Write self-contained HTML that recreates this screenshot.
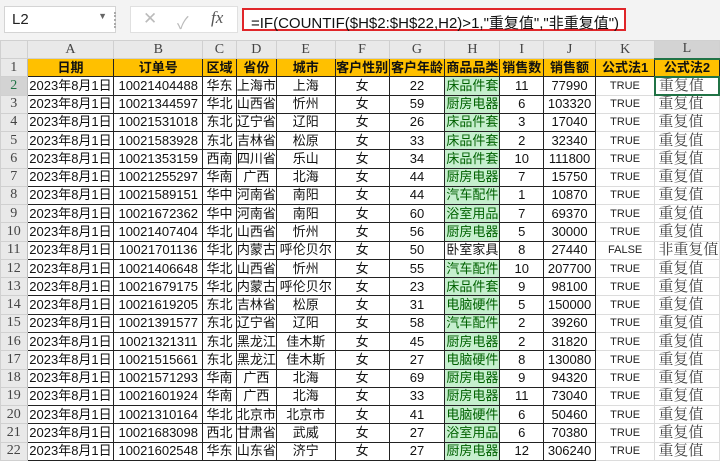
<!DOCTYPE html>
<html><head><meta charset="utf-8">
<style>
*{margin:0;padding:0;box-sizing:border-box}
body{width:720px;height:460px;overflow:hidden;background:#fff;font-family:"Liberation Sans","Noto Sans CJK SC",sans-serif;position:relative}
#top{position:absolute;left:0;top:0;width:720px;height:40px;background:#f3f3f3}
.nb{position:absolute;left:4px;top:6px;width:112px;height:27px;background:#fff;border:1px solid #d4d4d4;font-size:15px;padding:4px 0 0 7px;color:#222}
.nb span{position:absolute;right:8px;top:4px;font-size:9px;color:#666}
.dots{position:absolute;left:114px;top:12px;width:3px;height:16px;border-left:2px dotted #aaa}
.fb{position:absolute;left:130px;top:6px;width:108px;height:27px;background:#fff;border:1px solid #e0e0e0;color:#bbb;font-size:17px}
.fx{position:absolute;left:242px;top:8px;width:384px;height:23px;border:2px solid #e0262a;background:#fff;font-size:15px;padding:2px 0 0 7px;color:#111;white-space:nowrap}
table{position:absolute;left:0;top:40px;border-collapse:collapse;table-layout:fixed}
td{height:18.27px;padding:0;font-size:13px;text-align:center;white-space:nowrap;overflow:hidden;border:1px solid #222;color:#111;line-height:16px}
tr.ch td{height:18px;background:#e9e9e9;border:1px solid #d0d0d0;font-family:"Liberation Serif",serif;color:#444;font-size:14px}
td.rn{background:#e9e9e9;border:1px solid #d0d0d0;font-family:"Liberation Serif",serif;color:#444;font-size:14px;border-right:1px solid #bbb}
tr.h td{background:#ffc000;font-weight:bold}
tr.h td.rn{background:#e9e9e9;font-weight:normal}
.g{background:#c6efce;color:#006100}
td.k{border:1px solid #dcdcdc;font-size:11px;color:#222}
td.l{border:1px solid #dcdcdc;text-align:left;padding-left:3px;font-family:"Liberation Serif","Noto Serif CJK SC",serif;color:#444;font-size:15px}
</style></head><body>
<div id="top">
<div class="nb">L2<span>▼</span></div>
<div class="dots"></div>
<div class="fb"><span style="position:absolute;left:12px;top:2px">✕</span><span style="position:absolute;left:46px;top:2px">✓</span><span style="position:absolute;left:80px;top:1px;font-family:'Liberation Serif',serif;font-style:italic;color:#555">fx</span></div>
<div class="fx">=IF(COUNTIF($H$2:$H$22,H2)&gt;1,"重复值","非重复值")</div>
</div>
<table>
<colgroup><col style="width:27px"><col style="width:87px"><col style="width:89px"><col style="width:34px"><col style="width:39px"><col style="width:59px"><col style="width:54px"><col style="width:56px"><col style="width:55px"><col style="width:44px"><col style="width:52px"><col style="width:60px"><col style="width:64px"></colgroup>
<tr class="ch"><td></td><td>A</td><td>B</td><td>C</td><td>D</td><td>E</td><td>F</td><td>G</td><td>H</td><td>I</td><td>J</td><td>K</td><td style="background:#d3d3d3;border-bottom:2px solid #217346">L</td></tr>
<tr class="h"><td class="rn">1</td><td>日期</td><td>订单号</td><td>区域</td><td>省份</td><td>城市</td><td>客户性别</td><td>客户年龄</td><td>商品品类</td><td>销售数</td><td>销售额</td><td>公式法1</td><td>公式法2</td></tr>
<tr><td class="rn" style="background:#d3d3d3;color:#217346">2</td><td>2023年8月1日</td><td>10021404488</td><td>华东</td><td>上海市</td><td>上海</td><td>女</td><td>22</td><td class="g">床品件套</td><td>11</td><td>77990</td><td class="k">TRUE</td><td class="l" style="border:2px solid #217346">重复值</td></tr>
<tr><td class="rn">3</td><td>2023年8月1日</td><td>10021344597</td><td>华北</td><td>山西省</td><td>忻州</td><td>女</td><td>59</td><td class="g">厨房电器</td><td>6</td><td>103320</td><td class="k">TRUE</td><td class="l">重复值</td></tr>
<tr><td class="rn">4</td><td>2023年8月1日</td><td>10021531018</td><td>东北</td><td>辽宁省</td><td>辽阳</td><td>女</td><td>26</td><td class="g">床品件套</td><td>3</td><td>17040</td><td class="k">TRUE</td><td class="l">重复值</td></tr>
<tr><td class="rn">5</td><td>2023年8月1日</td><td>10021583928</td><td>东北</td><td>吉林省</td><td>松原</td><td>女</td><td>33</td><td class="g">床品件套</td><td>2</td><td>32340</td><td class="k">TRUE</td><td class="l">重复值</td></tr>
<tr><td class="rn">6</td><td>2023年8月1日</td><td>10021353159</td><td>西南</td><td>四川省</td><td>乐山</td><td>女</td><td>34</td><td class="g">床品件套</td><td>10</td><td>111800</td><td class="k">TRUE</td><td class="l">重复值</td></tr>
<tr><td class="rn">7</td><td>2023年8月1日</td><td>10021255297</td><td>华南</td><td>广西</td><td>北海</td><td>女</td><td>44</td><td class="g">厨房电器</td><td>7</td><td>15750</td><td class="k">TRUE</td><td class="l">重复值</td></tr>
<tr><td class="rn">8</td><td>2023年8月1日</td><td>10021589151</td><td>华中</td><td>河南省</td><td>南阳</td><td>女</td><td>44</td><td class="g">汽车配件</td><td>1</td><td>10870</td><td class="k">TRUE</td><td class="l">重复值</td></tr>
<tr><td class="rn">9</td><td>2023年8月1日</td><td>10021672362</td><td>华中</td><td>河南省</td><td>南阳</td><td>女</td><td>60</td><td class="g">浴室用品</td><td>7</td><td>69370</td><td class="k">TRUE</td><td class="l">重复值</td></tr>
<tr><td class="rn">10</td><td>2023年8月1日</td><td>10021407404</td><td>华北</td><td>山西省</td><td>忻州</td><td>女</td><td>56</td><td class="g">厨房电器</td><td>5</td><td>30000</td><td class="k">TRUE</td><td class="l">重复值</td></tr>
<tr><td class="rn">11</td><td>2023年8月1日</td><td>10021701136</td><td>华北</td><td>内蒙古</td><td>呼伦贝尔</td><td>女</td><td>50</td><td>卧室家具</td><td>8</td><td>27440</td><td class="k">FALSE</td><td class="l">非重复值</td></tr>
<tr><td class="rn">12</td><td>2023年8月1日</td><td>10021406648</td><td>华北</td><td>山西省</td><td>忻州</td><td>女</td><td>55</td><td class="g">汽车配件</td><td>10</td><td>207700</td><td class="k">TRUE</td><td class="l">重复值</td></tr>
<tr><td class="rn">13</td><td>2023年8月1日</td><td>10021679175</td><td>华北</td><td>内蒙古</td><td>呼伦贝尔</td><td>女</td><td>23</td><td class="g">床品件套</td><td>9</td><td>98100</td><td class="k">TRUE</td><td class="l">重复值</td></tr>
<tr><td class="rn">14</td><td>2023年8月1日</td><td>10021619205</td><td>东北</td><td>吉林省</td><td>松原</td><td>女</td><td>31</td><td class="g">电脑硬件</td><td>5</td><td>150000</td><td class="k">TRUE</td><td class="l">重复值</td></tr>
<tr><td class="rn">15</td><td>2023年8月1日</td><td>10021391577</td><td>东北</td><td>辽宁省</td><td>辽阳</td><td>女</td><td>58</td><td class="g">汽车配件</td><td>2</td><td>39260</td><td class="k">TRUE</td><td class="l">重复值</td></tr>
<tr><td class="rn">16</td><td>2023年8月1日</td><td>10021321311</td><td>东北</td><td>黑龙江</td><td>佳木斯</td><td>女</td><td>45</td><td class="g">厨房电器</td><td>2</td><td>31820</td><td class="k">TRUE</td><td class="l">重复值</td></tr>
<tr><td class="rn">17</td><td>2023年8月1日</td><td>10021515661</td><td>东北</td><td>黑龙江</td><td>佳木斯</td><td>女</td><td>27</td><td class="g">电脑硬件</td><td>8</td><td>130080</td><td class="k">TRUE</td><td class="l">重复值</td></tr>
<tr><td class="rn">18</td><td>2023年8月1日</td><td>10021571293</td><td>华南</td><td>广西</td><td>北海</td><td>女</td><td>69</td><td class="g">厨房电器</td><td>9</td><td>94320</td><td class="k">TRUE</td><td class="l">重复值</td></tr>
<tr><td class="rn">19</td><td>2023年8月1日</td><td>10021601924</td><td>华南</td><td>广西</td><td>北海</td><td>女</td><td>33</td><td class="g">厨房电器</td><td>11</td><td>73040</td><td class="k">TRUE</td><td class="l">重复值</td></tr>
<tr><td class="rn">20</td><td>2023年8月1日</td><td>10021310164</td><td>华北</td><td>北京市</td><td>北京市</td><td>女</td><td>41</td><td class="g">电脑硬件</td><td>6</td><td>50460</td><td class="k">TRUE</td><td class="l">重复值</td></tr>
<tr><td class="rn">21</td><td>2023年8月1日</td><td>10021683098</td><td>西北</td><td>甘肃省</td><td>武威</td><td>女</td><td>27</td><td class="g">浴室用品</td><td>6</td><td>70380</td><td class="k">TRUE</td><td class="l">重复值</td></tr>
<tr><td class="rn">22</td><td>2023年8月1日</td><td>10021602548</td><td>华东</td><td>山东省</td><td>济宁</td><td>女</td><td>27</td><td class="g">厨房电器</td><td>12</td><td>306240</td><td class="k">TRUE</td><td class="l">重复值</td></tr>
</table>
</body></html>
